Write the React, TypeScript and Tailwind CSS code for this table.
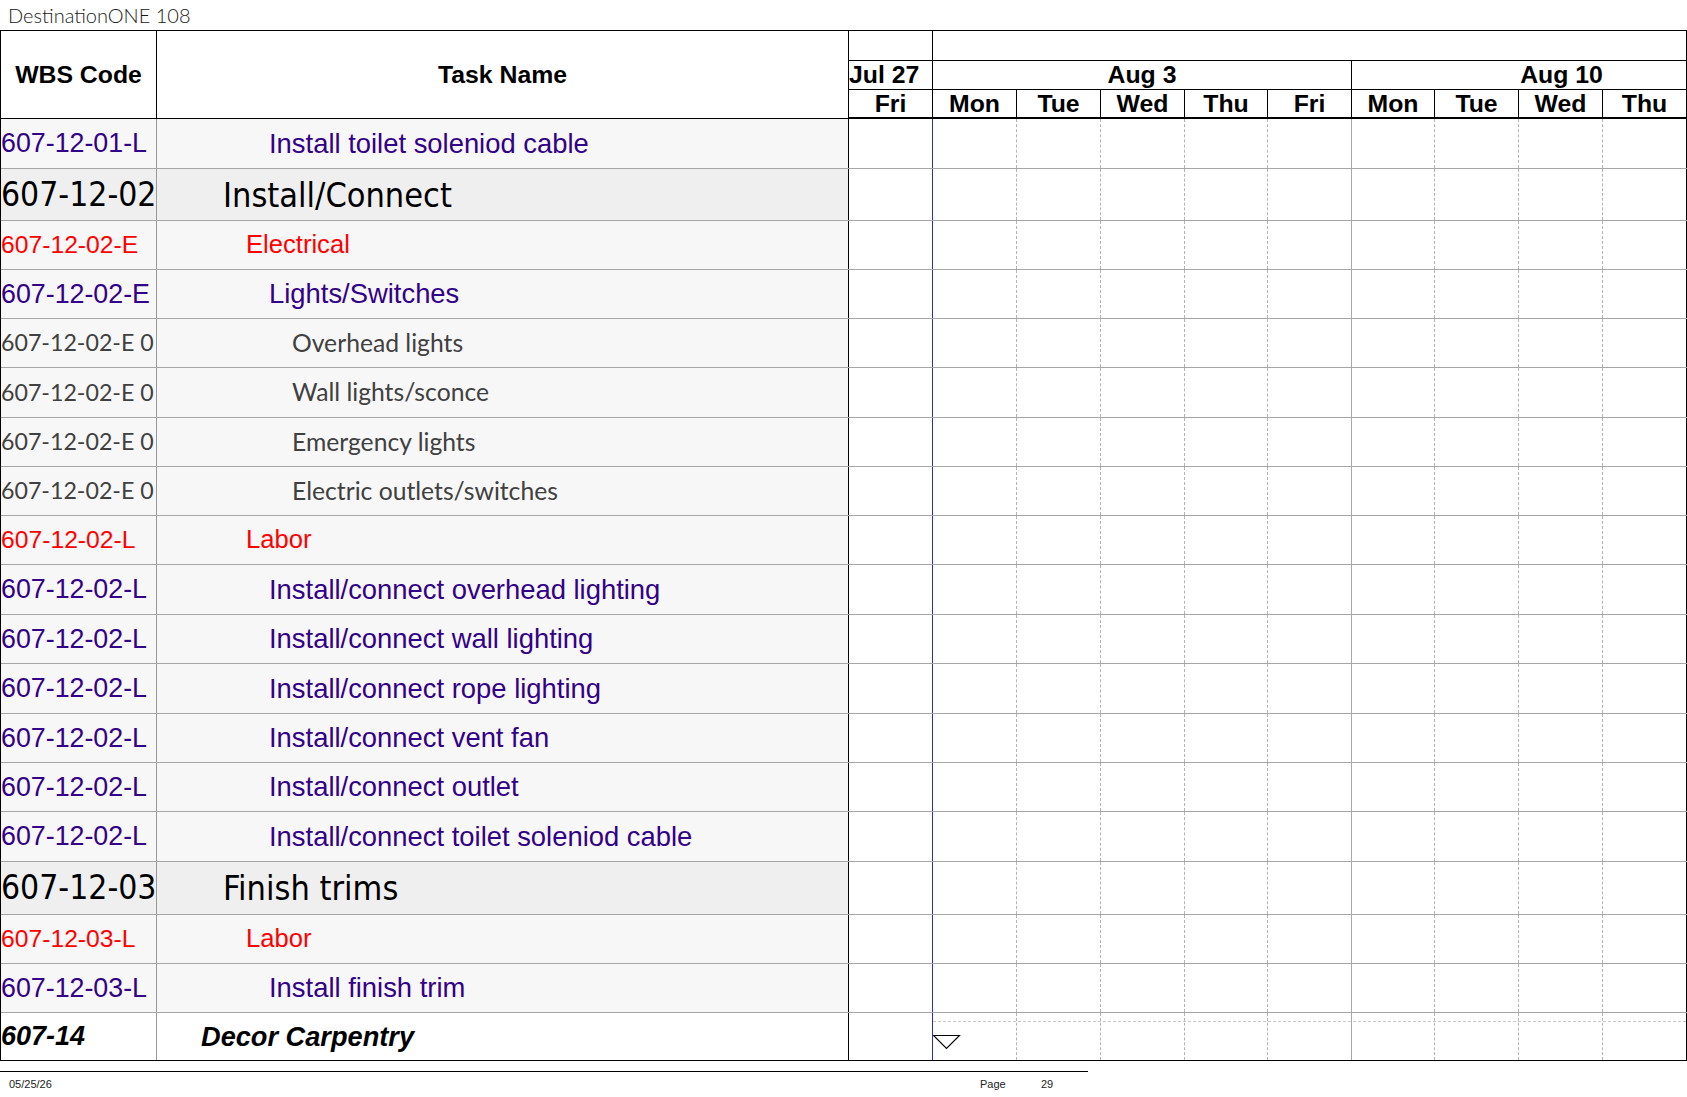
import React from "react";

type Kind = "purple" | "red" | "gray" | "big" | "bi";

const rows: { wbs: string; name: string; kind: Kind; h: string }[] = [
  { wbs: "607-12-01-L", name: "Install toilet soleniod cable", kind: "purple", h: "h-[50px]" },
  { wbs: "607-12-02", name: "Install/Connect", kind: "big", h: "h-[52px]" },
  { wbs: "607-12-02-E", name: "Electrical", kind: "red", h: "h-[49px]" },
  { wbs: "607-12-02-E", name: "Lights/Switches", kind: "purple", h: "h-[49px]" },
  { wbs: "607-12-02-E 0", name: "Overhead lights", kind: "gray", h: "h-[49px]" },
  { wbs: "607-12-02-E 0", name: "Wall lights/sconce", kind: "gray", h: "h-[50px]" },
  { wbs: "607-12-02-E 0", name: "Emergency lights", kind: "gray", h: "h-[49px]" },
  { wbs: "607-12-02-E 0", name: "Electric outlets/switches", kind: "gray", h: "h-[49px]" },
  { wbs: "607-12-02-L", name: "Labor", kind: "red", h: "h-[49px]" },
  { wbs: "607-12-02-L", name: "Install/connect overhead lighting", kind: "purple", h: "h-[50px]" },
  { wbs: "607-12-02-L", name: "Install/connect wall lighting", kind: "purple", h: "h-[49px]" },
  { wbs: "607-12-02-L", name: "Install/connect rope lighting", kind: "purple", h: "h-[50px]" },
  { wbs: "607-12-02-L", name: "Install/connect vent fan", kind: "purple", h: "h-[49px]" },
  { wbs: "607-12-02-L", name: "Install/connect outlet", kind: "purple", h: "h-[49px]" },
  { wbs: "607-12-02-L", name: "Install/connect toilet soleniod cable", kind: "purple", h: "h-[50px]" },
  { wbs: "607-12-03", name: "Finish trims", kind: "big", h: "h-[53px]" },
  { wbs: "607-12-03-L", name: "Labor", kind: "red", h: "h-[49px]" },
  { wbs: "607-12-03-L", name: "Install finish trim", kind: "purple", h: "h-[49px]" },
  { wbs: "607-14", name: "Decor Carpentry", kind: "bi", h: "h-[48px]" },
];

const kindStyle: Record<Kind, { text: string; wbsText: string; indent: string; bg: string }> = {
  purple: {
    text: "font-['Liberation_Sans',Arial,sans-serif] text-[27.4px] text-[#330088]",
    wbsText: "font-['Liberation_Sans',Arial,sans-serif] text-[26.8px] text-[#330088]",
    indent: "pl-[112px]",
    bg: "bg-[#f7f7f7]",
  },
  red: {
    text: "font-['Liberation_Sans',Arial,sans-serif] text-[25.6px] text-[#ff0000]",
    wbsText: "font-['Liberation_Sans',Arial,sans-serif] text-[24.7px] text-[#ff0000]",
    indent: "pl-[89px]",
    bg: "bg-[#f7f7f7]",
  },
  gray: {
    text: "font-['Lato','Open_Sans',sans-serif] text-[24.7px] text-[#404040]",
    wbsText: "font-['Lato','Open_Sans',sans-serif] text-[23.2px] text-[#404040]",
    indent: "pl-[135px]",
    bg: "bg-[#f7f7f7]",
  },
  big: {
    text: "font-['DejaVu_Sans_Condensed','DejaVu_Sans',sans-serif] [font-stretch:condensed] text-[34px] text-black",
    wbsText: "font-['DejaVu_Sans_Condensed','DejaVu_Sans',sans-serif] [font-stretch:condensed] text-[33.4px] text-black",
    indent: "pl-[66px]",
    bg: "bg-[#efefef]",
  },
  bi: {
    text: "font-['Liberation_Sans',Arial,sans-serif] font-bold italic text-[27.2px] text-black",
    wbsText: "font-['Liberation_Sans',Arial,sans-serif] font-bold italic text-[27px] text-black",
    indent: "pl-[44px]",
    bg: "bg-white",
  },
};

const dayWidths = [
  "w-[84px]",
  "w-[84px]",
  "w-[84px]",
  "w-[84px]",
  "w-[83px]",
  "w-[84px]",
  "w-[83px]",
  "w-[84px]",
  "w-[84px]",
  "w-[84px]",
];
const dayLabels = ["Fri", "Mon", "Tue", "Wed", "Thu", "Fri", "Mon", "Tue", "Wed", "Thu"];
const bodyBorders = [
  "border-r border-r-[#2b2bcc]",
  "border-r border-dashed border-r-[#b4b4b4]",
  "border-r border-dashed border-r-[#b4b4b4]",
  "border-r border-dashed border-r-[#b4b4b4]",
  "border-r border-dashed border-r-[#b4b4b4]",
  "border-r border-r-[#a8a8a8]",
  "border-r border-dashed border-r-[#b4b4b4]",
  "border-r border-dashed border-r-[#b4b4b4]",
  "border-r border-dashed border-r-[#b4b4b4]",
  "border-r border-r-black",
];

const HEAD = "font-['Liberation_Sans',Arial,sans-serif] font-bold text-[24.8px] text-black leading-none";

export default function App() {
  return (
    <div className="w-[1687px] h-[1097px] bg-white overflow-hidden">
      {/* Title */}
      <div className="h-[30px] flex items-center pl-[8px] font-['Lato','Noto_Sans',sans-serif] font-light text-[20px] text-[#1a1a1a]">
        DestinationONE 108
      </div>

      {/* Table */}
      <div className="w-[1687px] border-t border-l border-black flex flex-col">
        {/* Header */}
        <div className="flex h-[88px]">
          <div className={`w-[156px] border-r border-b border-black flex items-center justify-center pt-[1px] ${HEAD}`}>
            WBS Code
          </div>
          <div className={`w-[692px] border-r border-b border-black flex items-center justify-center pt-[1px] ${HEAD}`}>
            Task Name
          </div>
          <div className="w-[838px] flex flex-col">
            <div className="h-[30px] flex border-b border-black">
              <div className="w-[84px] border-r border-black" />
              <div className="flex-1 border-r border-black" />
            </div>
            <div className="h-[29px] flex border-b border-black">
              <div className={`w-[84px] border-r border-black flex items-center ${HEAD}`}>Jul 27</div>
              <div className={`w-[419px] border-r border-black flex items-center justify-center ${HEAD}`}>Aug 3</div>
              <div className="w-[335px] border-r border-black overflow-hidden">
                <div className={`w-[419px] h-full flex items-center justify-center ${HEAD}`}>Aug 10</div>
              </div>
            </div>
            <div className="h-[29px] flex border-b-2 border-black">
              {dayLabels.map((d, i) => (
                <div
                  key={i}
                  className={`${dayWidths[i]} border-r border-black flex items-center justify-center pt-[2px] ${HEAD}`}
                >
                  {d}
                </div>
              ))}
            </div>
          </div>
        </div>

        {/* Body */}
        {rows.map((r, idx) => {
          const s = kindStyle[r.kind];
          const last = idx === rows.length - 1;
          return (
            <div
              key={idx}
              className={`flex ${r.h} border-b ${last ? "border-b-black" : "border-b-[#a6a6a6]"}`}
            >
              <div
                className={`w-[156px] shrink-0 border-r border-r-[#999999] ${s.bg} flex items-center overflow-hidden whitespace-nowrap leading-none ${s.wbsText}`}
              >
                {r.wbs}
              </div>
              <div
                className={`w-[692px] shrink-0 border-r border-r-black ${s.bg} flex items-center overflow-hidden whitespace-nowrap leading-none ${s.indent} ${s.text}`}
              >
                {r.name}
              </div>
              <div className="w-[838px] shrink-0 flex relative bg-white">
                {dayWidths.map((w, i) => (
                  <div key={i} className={`${w} h-full ${bodyBorders[i]}`} />
                ))}
                {last && (
                  <>
                    <div className="absolute left-[84px] right-[1px] top-[8px] border-t border-dashed border-t-[#c8c8c8]" />
                    <svg
                      className="absolute left-[84px] top-[22px]"
                      width="28"
                      height="15"
                      viewBox="0 0 28 15"
                    >
                      <polygon points="0.5,0.5 26.5,0.5 13.5,13.5" fill="white" stroke="black" strokeWidth="1.2" />
                    </svg>
                  </>
                )}
              </div>
            </div>
          );
        })}
      </div>

      {/* Footer */}
      <div className="w-[1088px] mt-[10px] border-t border-black pt-[7px] flex items-center font-['Liberation_Sans',Arial,sans-serif] text-[11px] text-[#222] leading-none">
        <span className="w-[980px] pl-[9px]">05/25/26</span>
        <span className="w-[61px]">Page</span>
        <span>29</span>
      </div>
    </div>
  );
}
